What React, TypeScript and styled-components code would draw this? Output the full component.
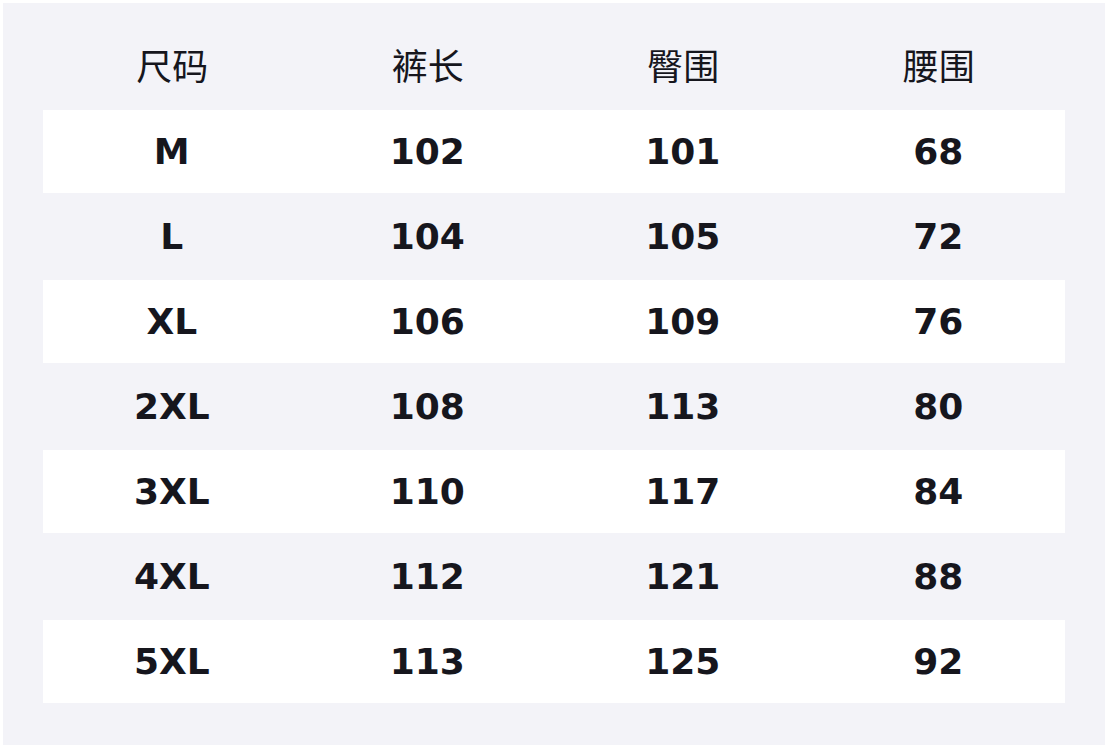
import styled, { createGlobalStyle } from 'styled-components';

const GlobalStyle = createGlobalStyle`
  html, body {
    margin: 0;
    padding: 0;
    background: #ffffff;
  }
`;

const Panel = styled.section`
  margin: 3px;
  width: 1102px;
  height: 742px;
  box-sizing: border-box;
  padding: 0 40px 42px;
  background-color: #f3f3f8;
  font-family: 'DejaVu Sans', 'Noto Sans CJK SC', sans-serif;
  color: #16161d;
`;

const HeadRow = styled.div`
  display: grid;
  grid-template-columns: repeat(4, 1fr);
  height: 107px;
  box-sizing: border-box;
  padding-top: 43px;
`;

const HeadCell = styled.div`
  text-align: center;
  padding-left: 3px;
  font-family: 'Noto Sans CJK SC', sans-serif;
  font-size: 36px;
  line-height: 36px;
  font-weight: 400;
`;

const Row = styled.div<{ $striped: boolean }>`
  display: grid;
  grid-template-columns: repeat(4, 1fr);
  align-items: center;
  height: ${({ $striped }) => ($striped ? 83 : 87)}px;
  background-color: ${({ $striped }) => ($striped ? '#ffffff' : 'transparent')};
`;

const Cell = styled.div`
  text-align: center;
  padding-left: 2px;
  font-size: 36px;
  font-weight: 700;
  line-height: 1;
`;

const headers = ['尺码', '裤长', '臀围', '腰围'];

const sizes = [
  ['M', '102', '101', '68'],
  ['L', '104', '105', '72'],
  ['XL', '106', '109', '76'],
  ['2XL', '108', '113', '80'],
  ['3XL', '110', '117', '84'],
  ['4XL', '112', '121', '88'],
  ['5XL', '113', '125', '92'],
];

const App = () => {
  return (
    <>
      <GlobalStyle />
      <Panel>
        <HeadRow>
          {headers.map((h) => (
            <HeadCell key={h}>{h}</HeadCell>
          ))}
        </HeadRow>
        {sizes.map((row, i) => (
          <Row key={row[0]} $striped={i % 2 === 0}>
            {row.map((v, j) => (
              <Cell key={j}>{v}</Cell>
            ))}
          </Row>
        ))}
      </Panel>
    </>
  );
};

export default App;
